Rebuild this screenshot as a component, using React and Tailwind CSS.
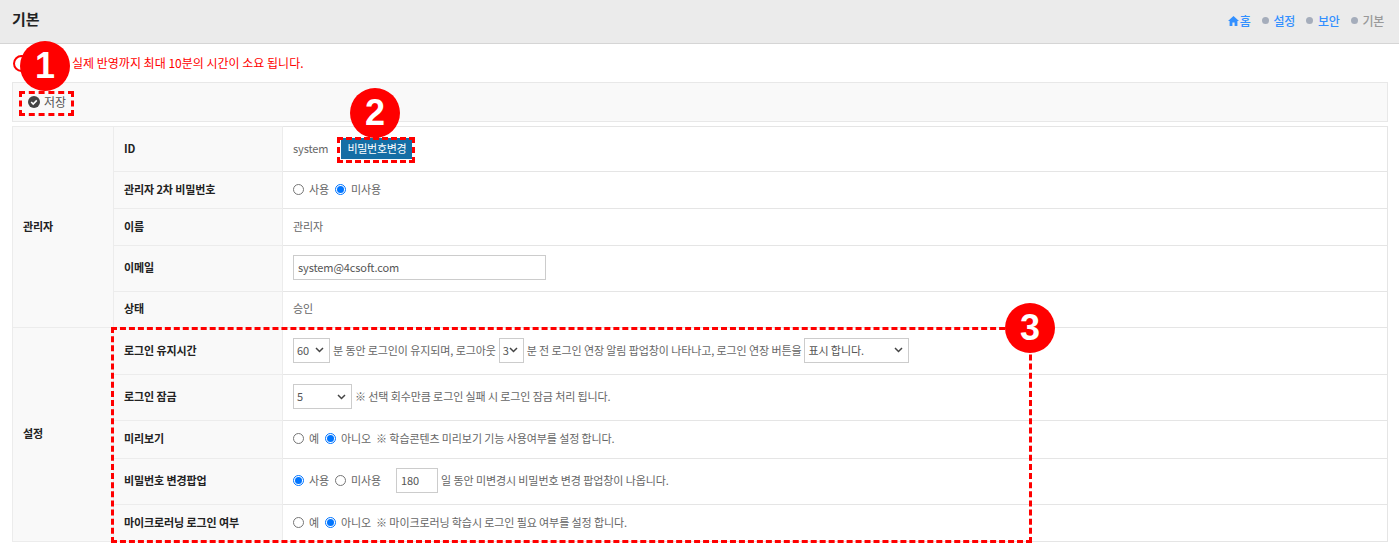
import React from "react";

function Radio({ checked, label }) {
    return (
        <span className="inline-flex items-center">
            <span className={`w-[11px] h-[11px] rounded-full border flex items-center justify-center bg-white ${checked ? "border-[#0075ff]" : "border-[#767676]"}`}>
                {checked && <span className="w-[7px] h-[7px] rounded-full bg-[#0075ff]" />}
            </span>
            <span className="ml-[5px]">{label}</span>
        </span>
    );
}

function Select({ value, className }) {
    return (
        <span className={`inline-flex items-center justify-between h-[25px] border border-[#ccc] bg-white pl-[3px] pr-[5px] text-[#555] ${className}`}>
            <span>{value}</span>
            <svg width="9" height="6" viewBox="0 0 9 6" className="shrink-0">
                <path d="M1 1l3.5 3.5L8 1" fill="none" stroke="#444" strokeWidth="1.5" />
            </svg>
        </span>
    );
}

function Badge({ n, className }) {
    return (
        <div className={`absolute w-[50px] h-[50px] rounded-full bg-[#f00] text-white flex items-center justify-center text-[36px] font-bold leading-none font-['Liberation_Sans',sans-serif] ${className}`}>
            {n}
        </div>
    );
}

const th = "border border-[#ececec] bg-[#f9f9f9] text-left font-bold text-[#222] pl-[10px] pb-[2px]";
const td = "border border-[#e5e5e5] bg-white pl-[10px] pb-[2px] text-[#666]";

export default function App() {
    return (
        <div className="relative w-[1399px] h-[549px] overflow-hidden bg-white text-[11px] tracking-[-0.1px] font-['Noto_Sans_CJK_KR','Noto_Sans',sans-serif]">
            {/* page title */}
            <div className="h-[44px] bg-[#ebebeb] border-b border-[#d5d5d5] flex items-center justify-between pl-[12px] pr-[15px] pb-[5px]">
                <h1 className="text-[15px] font-bold text-[#222]">기본</h1>
                <div className="flex items-center text-[12px] font-medium pt-[3px] tracking-[-0.3px]">
                    <svg width="11" height="10" viewBox="0 0 11 10" className="mr-[1px]">
                        <path d="M5.5 0L0 5h1.6v5h2.8V6.6h2.2V10h2.8V5H11z" fill="#3390ff" />
                    </svg>
                    <span className="text-[#3390ff]">홈</span>
                    <span className="w-[7px] h-[7px] rounded-full bg-[#a5adbb] ml-[11px] mr-[5px]" />
                    <span className="text-[#3390ff]">설정</span>
                    <span className="w-[7px] h-[7px] rounded-full bg-[#a5adbb] ml-[11px] mr-[5px]" />
                    <span className="text-[#3390ff]">보안</span>
                    <span className="w-[7px] h-[7px] rounded-full bg-[#a5adbb] ml-[11px] mr-[5px]" />
                    <span className="text-[#999]">기본</span>
                </div>
            </div>

            <div className="pl-[12px] pr-[11px]">
                {/* notice */}
                <div className="h-[38px] flex items-center text-[12px] tracking-[0] text-[#f00] pl-[60px] pb-[1px]">
                    실제 반영까지 최대 10분의 시간이 소요 됩니다.
                </div>

                {/* toolbar */}
                <div className="h-[40px] border border-[#e8e8e8] bg-[#f9f9f9] flex items-center pl-[15px] text-[#555] text-[12px]">
                    <svg width="12" height="12" viewBox="0 0 12 12" className="mr-[4px]">
                        <circle cx="6" cy="6" r="6" fill="#444" />
                        <path d="M3.2 6l2 2 3.6-3.6" fill="none" stroke="#fff" strokeWidth="1.6" />
                    </svg>
                    저장
                </div>

                {/* form table */}
                <table className="w-full mt-[4px] border-collapse table-fixed">
                    <colgroup>
                        <col className="w-[101px]" />
                        <col className="w-[169px]" />
                        <col />
                    </colgroup>
                    <tbody>
                        <tr className="h-[45px]">
                            <th rowSpan={5} className={th}>관리자</th>
                            <th className={th}>ID</th>
                            <td className={td}>
                                <span className="inline-flex items-center">
                                    system
                                    <span className="ml-[13px] h-[21px] px-[6px] bg-[#146ea5] text-white flex items-center tracking-[-0.3px]">비밀번호변경</span>
                                </span>
                            </td>
                        </tr>
                        <tr className="h-[37px]">
                            <th className={th}>관리자 2차 비밀번호</th>
                            <td className={td}>
                                <span className="flex items-center gap-[6px]">
                                    <Radio label="사용" />
                                    <Radio checked label="미사용" />
                                </span>
                            </td>
                        </tr>
                        <tr className="h-[37px]">
                            <th className={th}>이름</th>
                            <td className={td}>관리자</td>
                        </tr>
                        <tr className="h-[46px]">
                            <th className={th}>이메일</th>
                            <td className={td}>
                                <span className="flex items-center w-[253px] h-[25px] border border-[#ccc] pl-[4px] text-[#555]">system@4csoft.com</span>
                            </td>
                        </tr>
                        <tr className="h-[36px]">
                            <th className={th}>상태</th>
                            <td className={td}>승인</td>
                        </tr>
                        <tr className="h-[47px]">
                            <th rowSpan={5} className={th}>설정</th>
                            <th className={th}>로그인 유지시간</th>
                            <td className={td}>
                                <span className="flex items-center gap-[3px]">
                                    <Select value="60" className="w-[37px]" />
                                    분 동안 로그인이 유지되며, 로그아웃
                                    <Select value="3" className="w-[25px]" />
                                    분 전 로그인 연장 알림 팝업창이 나타나고, 로그인 연장 버튼을
                                    <Select value="표시 합니다." className="w-[105px]" />
                                </span>
                            </td>
                        </tr>
                        <tr className="h-[46px]">
                            <th className={th}>로그인 잠금</th>
                            <td className={td}>
                                <span className="flex items-center gap-[3px]">
                                    <Select value="5" className="w-[59px]" />
                                    ※ 선택 회수만큼 로그인 실패 시 로그인 잠금 처리 됩니다.
                                </span>
                            </td>
                        </tr>
                        <tr className="h-[38px]">
                            <th className={th}>미리보기</th>
                            <td className={td}>
                                <span className="flex items-center gap-[6px]">
                                    <Radio label="예" />
                                    <Radio checked label="아니오" />
                                    <span className="-ml-[1px]">※ 학습콘텐츠 미리보기 기능 사용여부를 설정 합니다.</span>
                                </span>
                            </td>
                        </tr>
                        <tr className="h-[46px]">
                            <th className={th}>비밀번호 변경팝업</th>
                            <td className={td}>
                                <span className="flex items-center gap-[6px]">
                                    <Radio checked label="사용" />
                                    <Radio label="미사용" />
                                    <span className="ml-[9px] flex items-center w-[42px] h-[25px] border border-[#ccc] pl-[4px] text-[#555]">180</span>
                                    <span className="-ml-[3px]">일 동안 미변경시 비밀번호 변경 팝업창이 나옵니다.</span>
                                </span>
                            </td>
                        </tr>
                        <tr className="h-[37px]">
                            <th className={th}>마이크로러닝 로그인 여부</th>
                            <td className={td}>
                                <span className="flex items-center gap-[6px]">
                                    <Radio label="예" />
                                    <Radio checked label="아니오" />
                                    <span className="-ml-[1px]">※ 마이크로러닝 학습시 로그인 필요 여부를 설정 합니다.</span>
                                </span>
                            </td>
                        </tr>
                    </tbody>
                </table>
            </div>

            {/* annotations laid over the screenshot */}
            <div className="absolute left-[13px] top-[55px] w-[17px] h-[17px] rounded-full border-2 border-[#f00]" />
            <div className="absolute left-[19px] top-[91px] w-[55px] h-[25px] border-[3px] border-dashed border-[#f00]" />
            <div className="absolute left-[337px] top-[137px] w-[78px] h-[26px] border-[3px] border-dashed border-[#f00]" />
            <div className="absolute left-[111px] top-[327px] w-[921px] h-[216px] border-[3px] border-dashed border-[#f00]" />
            <Badge n="1" className="left-[20px] top-[41px]" />
            <Badge n="2" className="left-[350px] top-[88px]" />
            <Badge n="3" className="left-[1005px] top-[303px]" />
        </div>
    );
}
